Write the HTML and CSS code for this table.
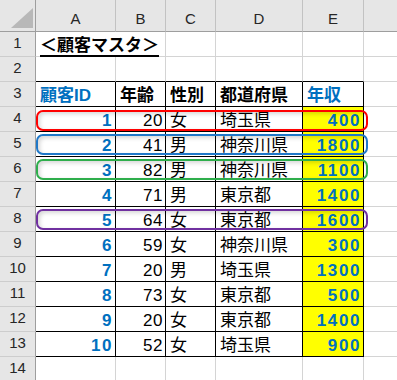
FILE: index.html
```html
<!DOCTYPE html>
<html lang="ja">
<head>
<meta charset="utf-8">
<title>顧客マスタ</title>
<link rel="stylesheet" href="styles.css">
</head>
<body>
<div class="sheet">
  <div class="cell corner"><svg width="35" height="31" viewBox="0 0 35 31"><polygon points="11,28 33,28 33,8" fill="#b8b8b8"/></svg></div>
  <div class="cell hd">A</div><div class="cell hd">B</div><div class="cell hd">C</div><div class="cell hd">D</div><div class="cell hd">E</div><div class="cell hd last"></div>

  <div class="cell rn">1</div>
  <div class="cell title-cell"><span class="title">＜顧客マスタ＞</span></div><div class="cell"></div><div class="cell"></div><div class="cell"></div><div class="cell"></div><div class="cell last"></div>

  <div class="cell rn">2</div>
  <div class="cell above"></div><div class="cell above"></div><div class="cell above"></div><div class="cell above"></div><div class="cell above"></div><div class="cell last"></div>

  <div class="cell rn">3</div>
  <div class="cell t b blue">顧客ID</div><div class="cell t b">年齢</div><div class="cell t b">性別</div><div class="cell t b">都道府県</div><div class="cell t b blue">年収</div><div class="cell last"></div>

  <div class="cell rn">4</div>
  <div class="cell t r b blue num">1</div><div class="cell t r num">20</div><div class="cell t">女</div><div class="cell t">埼玉県</div><div class="cell t r b blue num y">400</div><div class="cell last"></div>

  <div class="cell rn">5</div>
  <div class="cell t r b blue num">2</div><div class="cell t r num">41</div><div class="cell t">男</div><div class="cell t">神奈川県</div><div class="cell t r b blue num y">1800</div><div class="cell last"></div>

  <div class="cell rn">6</div>
  <div class="cell t r b blue num">3</div><div class="cell t r num">82</div><div class="cell t">男</div><div class="cell t">神奈川県</div><div class="cell t r b blue num y">1100</div><div class="cell last"></div>

  <div class="cell rn">7</div>
  <div class="cell t r b blue num">4</div><div class="cell t r num">71</div><div class="cell t">男</div><div class="cell t">東京都</div><div class="cell t r b blue num y">1400</div><div class="cell last"></div>

  <div class="cell rn">8</div>
  <div class="cell t r b blue num">5</div><div class="cell t r num">64</div><div class="cell t">女</div><div class="cell t">東京都</div><div class="cell t r b blue num y">1600</div><div class="cell last"></div>

  <div class="cell rn">9</div>
  <div class="cell t r b blue num">6</div><div class="cell t r num">59</div><div class="cell t">女</div><div class="cell t">神奈川県</div><div class="cell t r b blue num y">300</div><div class="cell last"></div>

  <div class="cell rn">10</div>
  <div class="cell t r b blue num">7</div><div class="cell t r num">20</div><div class="cell t">男</div><div class="cell t">埼玉県</div><div class="cell t r b blue num y">1300</div><div class="cell last"></div>

  <div class="cell rn">11</div>
  <div class="cell t r b blue num">8</div><div class="cell t r num">73</div><div class="cell t">女</div><div class="cell t">東京都</div><div class="cell t r b blue num y">500</div><div class="cell last"></div>

  <div class="cell rn">12</div>
  <div class="cell t r b blue num">9</div><div class="cell t r num">20</div><div class="cell t">女</div><div class="cell t">東京都</div><div class="cell t r b blue num y">1400</div><div class="cell last"></div>

  <div class="cell rn">13</div>
  <div class="cell t r b blue num">10</div><div class="cell t r num">52</div><div class="cell t">女</div><div class="cell t">埼玉県</div><div class="cell t r b blue num y">900</div><div class="cell last"></div>

  <div class="cell rn">14</div>
  <div class="cell"></div><div class="cell"></div><div class="cell"></div><div class="cell"></div><div class="cell"></div><div class="cell last"></div>

  <div class="hl hl-red"></div>
  <div class="hl hl-blue"></div>
  <div class="hl hl-green"></div>
  <div class="hl hl-purple"></div>
</div>
</body>
</html>
```

FILE: styles.css
```css
* { box-sizing: border-box; }
html, body { margin: 0; padding: 0; background: #fff; }

.sheet {
  position: relative;
  width: 397px;
  height: 380px;
  overflow: hidden;
  display: grid;
  grid-template-columns: 36px 80px 50px 50px 87px 61px 33px;
  grid-template-rows: 32px repeat(14, 25px);
  font-family: "Liberation Sans", "Noto Sans CJK JP", sans-serif;
  color: #000;
}

.cell {
  border-right: 1px solid #d4d4d4;
  border-bottom: 1px solid #d4d4d4;
  font-size: 17px;
  line-height: 20px;
  padding: 4px 3px 0 4px;
  white-space: nowrap;
  overflow: hidden;
}

.last { border-right: none; }

.corner {
  background: #e6e6e6;
  border-right-color: #9e9e9e;
  border-bottom-color: #9e9e9e;
  padding: 0;
}
.corner svg { display: block; }

.hd {
  background: #e6e6e6;
  border-right-color: #c2c2c2;
  border-bottom-color: #9e9e9e;
  text-align: center;
  font-size: 15px;
  padding: 9px 0 0;
  color: #262626;
}

.rn {
  background: #e6e6e6;
  border-right-color: #9e9e9e;
  border-bottom-color: #cdcdcd;
  text-align: center;
  font-size: 15px;
  padding: 1px 0 0;
  color: #262626;
}

.title-cell { overflow: visible; border-right: none; }
.title {
  font-weight: bold;
  text-decoration: underline;
  text-decoration-thickness: 1.5px;
  text-underline-offset: 4px;
  position: relative;
  left: 0;
}

.above { border-bottom-color: #000; }
.t { border-right-color: #000; border-bottom-color: #000; }

.r { text-align: right; padding-right: 2px; }
.b { font-weight: bold; }
.blue { color: #0070c0; }
.num { letter-spacing: 0.5px; }
.b.num { letter-spacing: 1.6px; }
.y { background: #ffff00; }

.hl {
  position: absolute;
  left: 36px;
  width: 332px;
  height: 21px;
  border: 2px solid;
  border-radius: 7px;
  box-shadow: inset 2px 2px 4px rgba(0, 0, 0, 0.16);
}
.hl-red { top: 110px; border-color: #ff0000; }
.hl-blue { top: 134px; border-color: #1f78c8; }
.hl-green { top: 159px; border-color: #2eae4c; }
.hl-purple { top: 209px; border-color: #7030a0; }
```
